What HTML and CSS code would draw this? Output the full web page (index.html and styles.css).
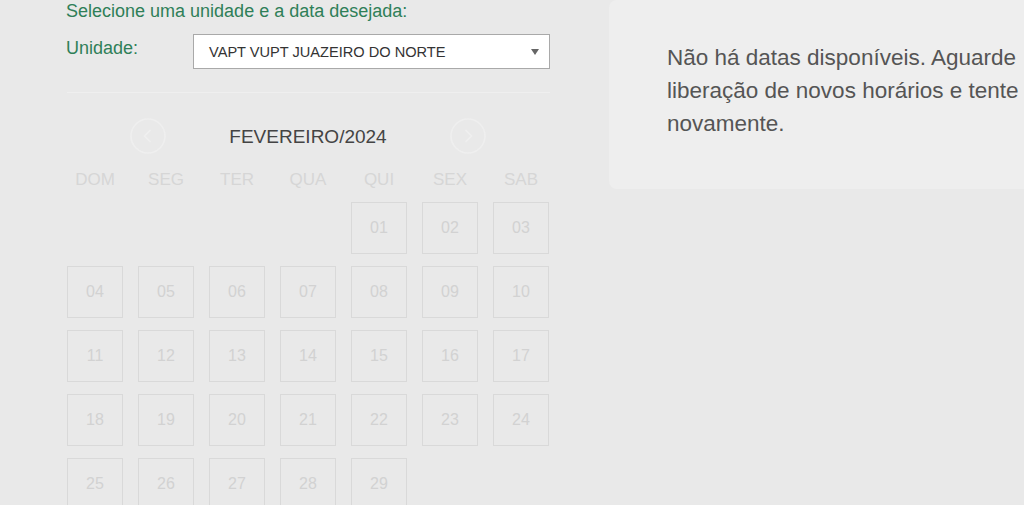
FILE: index.html
```html
<!DOCTYPE html>
<html lang="pt-BR">
<head>
<meta charset="utf-8">
<title>Agendamento</title>
<link rel="stylesheet" href="styles.css">
</head>
<body>
<div class="page">
  <section class="left">
    <p class="title">Selecione uma unidade e a data desejada:</p>
    <div class="unit-row">
      <label class="unit-label">Unidade:</label>
      <div class="select">
        <span class="select-text">VAPT VUPT JUAZEIRO DO NORTE</span>
        <span class="select-arrow"></span>
      </div>
    </div>
    <hr class="divider">
    <div class="cal">
      <div class="cal-head">
        <span class="nav">
          <svg width="36" height="36" viewBox="0 0 36 36"><circle cx="18" cy="18" r="17" fill="none" stroke="#efefef" stroke-width="1.6"/><path d="M20.5 12 L14.5 18 L20.5 24" fill="none" stroke="#efefef" stroke-width="1.6"/></svg>
        </span>
        <span class="month">FEVEREIRO/2024</span>
        <span class="nav">
          <svg width="36" height="36" viewBox="0 0 36 36"><circle cx="18" cy="18" r="17" fill="none" stroke="#efefef" stroke-width="1.6"/><path d="M15.5 12 L21.5 18 L15.5 24" fill="none" stroke="#efefef" stroke-width="1.6"/></svg>
        </span>
      </div>
      <div class="weekdays">
        <span>DOM</span><span>SEG</span><span>TER</span><span>QUA</span><span>QUI</span><span>SEX</span><span>SAB</span>
      </div>
      <div class="days">
        <span class="empty"></span><span class="empty"></span><span class="empty"></span><span class="empty"></span>
        <span class="day">01</span><span class="day">02</span><span class="day">03</span>
        <span class="day">04</span><span class="day">05</span><span class="day">06</span><span class="day">07</span><span class="day">08</span><span class="day">09</span><span class="day">10</span>
        <span class="day">11</span><span class="day">12</span><span class="day">13</span><span class="day">14</span><span class="day">15</span><span class="day">16</span><span class="day">17</span>
        <span class="day">18</span><span class="day">19</span><span class="day">20</span><span class="day">21</span><span class="day">22</span><span class="day">23</span><span class="day">24</span>
        <span class="day">25</span><span class="day">26</span><span class="day">27</span><span class="day">28</span><span class="day">29</span>
      </div>
    </div>
  </section>
  <aside class="panel">
    <p class="msg">Não há datas disponíveis. Aguarde liberação de novos horários e tente novamente.</p>
  </aside>
</div>
</body>
</html>
```

FILE: styles.css
```css
html, body {
  margin: 0;
  padding: 0;
}
body {
  width: 1024px;
  height: 505px;
  overflow: hidden;
  background: #e9e9e9;
  font-family: "Liberation Sans", Arial, sans-serif;
}
.page {
  display: flex;
  align-items: flex-start;
  padding-left: 66px;
  gap: 59px;
}
.left {
  width: 484px;
  flex-shrink: 0;
}
.title {
  margin: 0;
  font-size: 18px;
  line-height: 22px;
  color: #2f7f58;
}
.unit-row {
  display: flex;
  align-items: flex-start;
  margin-top: 12px;
}
.unit-label {
  width: 127px;
  padding-top: 3px;
  font-size: 18px;
  line-height: 22px;
  color: #2f7f58;
}
.select {
  flex: 1;
  height: 35px;
  box-sizing: border-box;
  border: 1px solid #a9a9a9;
  background: #fff;
  display: flex;
  align-items: center;
  padding: 1px 10px 0 15px;
}
.select-text {
  flex: 1;
  font-size: 14.6px;
  color: #333;
}
.select-arrow {
  width: 0;
  height: 0;
  border-left: 4px solid transparent;
  border-right: 4px solid transparent;
  border-top: 6px solid #666;
}
.divider {
  margin: 23px 0 0 1px;
  border: 0;
  height: 1px;
  background: #efefef;
}
.cal {
  margin-left: 1px;
  width: 482px;
}
.cal-head {
  margin-top: 25px;
  height: 36px;
  display: flex;
  align-items: center;
  justify-content: space-between;
  padding: 0 63px;
}
.nav {
  width: 36px;
  height: 36px;
  display: block;
}
.nav svg {
  display: block;
}
.month {
  font-size: 19px;
  color: #444;
  padding-top: 2px;
}
.weekdays {
  margin-top: 16px;
  display: grid;
  grid-template-columns: repeat(7, 56px);
  column-gap: 15px;
  font-size: 17px;
  line-height: 20px;
  color: #d6d6d6;
  text-align: center;
}
.days {
  margin-top: 12px;
  display: grid;
  grid-template-columns: repeat(7, 56px);
  grid-auto-rows: 52px;
  column-gap: 15px;
  row-gap: 12px;
}
.day {
  box-sizing: border-box;
  border: 1px solid #d9d9d9;
  display: flex;
  align-items: center;
  justify-content: center;
  font-size: 16px;
  color: #d2d2d2;
}
.panel {
  flex-shrink: 0;
  width: 480px;
  height: 189px;
  box-sizing: border-box;
  background: #eeeeee;
  border-radius: 8px;
  padding: 41px 0 0 58px;
}
.msg {
  margin: 0;
  width: 356px;
  font-size: 22.5px;
  line-height: 33px;
  color: #555;
}
```
